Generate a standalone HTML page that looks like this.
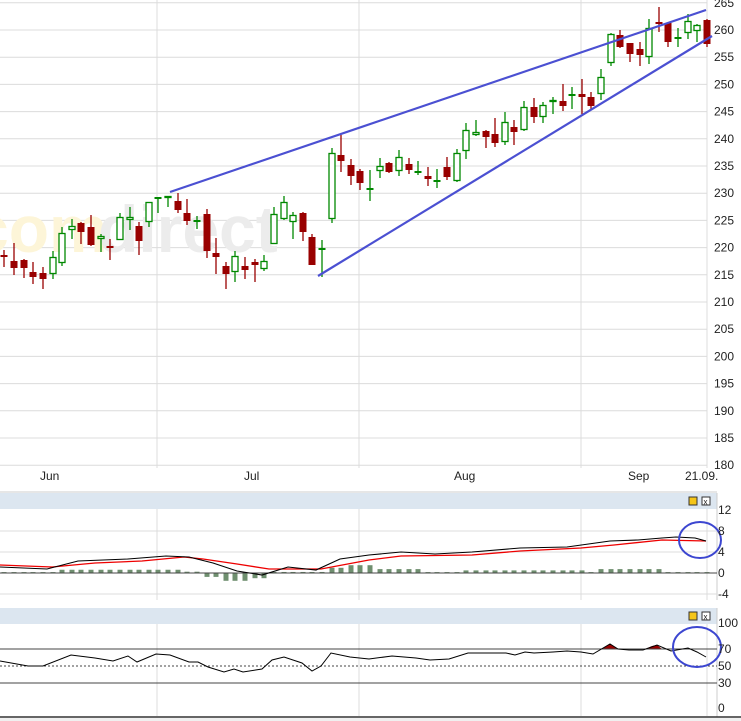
<!DOCTYPE html>
<html><head><meta charset="utf-8"><style>
html,body{margin:0;padding:0;background:#fff;width:741px;height:721px;overflow:hidden}
svg{display:block;font-family:"Liberation Sans",sans-serif}
</style></head><body>
<svg id="s" width="741" height="721" viewBox="0 0 741 721" xmlns="http://www.w3.org/2000/svg">
<rect width="741" height="721" fill="#fff"/>
<g id="grid" stroke="#dcdcdc" stroke-width="1"></g>
<text x="-28" y="252" font-size="66" font-weight="bold" fill="#fdf5d8" font-family="Liberation Sans,sans-serif">com</text>
<text x="98" y="252" font-size="66" font-weight="bold" fill="#ececec" font-family="Liberation Sans,sans-serif">direct</text>
<g id="candles"></g>
<line x1="170" y1="192" x2="706" y2="10" stroke="#4b50d2" stroke-width="2.2"/>
<line x1="318" y1="276" x2="712" y2="36" stroke="#4b50d2" stroke-width="2.2"/>
<g id="labels" font-size="12" fill="#222"></g>
<g font-size="12" fill="#222">
<text x="40" y="480">Jun</text><text x="244" y="480">Jul</text><text x="454" y="480">Aug</text><text x="628" y="480">Sep</text><text x="685" y="480">21.09.</text>
</g>
<line x1="0" y1="492" x2="717" y2="492" stroke="#ccc"/>
<!-- MACD panel -->
<rect x="0" y="493" width="717" height="16" fill="#dce6f0"/>
<line x1="717" y1="493" x2="717" y2="600" stroke="#ccc"/>
<rect x="689" y="497" width="8" height="8" fill="#f5c518" stroke="#333" stroke-width="1"/>
<rect x="702" y="497" width="8" height="8" fill="#fff" stroke="#333" stroke-width="1"/>
<text x="703.5" y="504.5" font-size="8" fill="#222">x</text>
<g stroke="#dcdcdc"><line x1="0" y1="531" x2="717" y2="531"/><line x1="0" y1="552" x2="717" y2="552"/><line x1="0" y1="594" x2="717" y2="594"/>
<line x1="157" y1="509" x2="157" y2="600"/><line x1="359" y1="509" x2="359" y2="600"/><line x1="581" y1="509" x2="581" y2="600"/><line x1="707" y1="509" x2="707" y2="600"/></g>
<g id="hist" fill="#6f8f6f"></g>
<line x1="0" y1="573" x2="717" y2="573" stroke="#444"/>
<polyline fill="none" stroke="#e00" stroke-width="1.3" points="0,565 52,567 95,563 142,561 184,557 203,559 237,564 269,569 321,569 369,560 401,556 472,555 520,551 581,548 614,545 662,540 706,541"/>
<polyline fill="none" stroke="#000" stroke-width="1.1" points="0,567 47,569 78,561 128,559 166,556 189,557 213,563 237,571 262,575 288,567 316,570 340,559 369,555 401,552 435,554 472,552 520,548 567,547 610,541 638,540 662,538 676,537 695,538 706,541"/>
<ellipse cx="700" cy="540" rx="21" ry="18" fill="none" stroke="#3c46d0" stroke-width="2"/>
<g font-size="12" fill="#222"><text x="718" y="514">12</text><text x="718" y="535">8</text><text x="718" y="556">4</text><text x="718" y="577">0</text><text x="718" y="598">-4</text></g>
<!-- RSI panel -->
<rect x="0" y="608" width="717" height="16" fill="#dce6f0"/>
<line x1="717" y1="608" x2="717" y2="717" stroke="#ccc"/>
<rect x="689" y="612" width="8" height="8" fill="#f5c518" stroke="#333" stroke-width="1"/>
<rect x="702" y="612" width="8" height="8" fill="#fff" stroke="#333" stroke-width="1"/>
<text x="703.5" y="619.5" font-size="8" fill="#222">x</text>
<g stroke="#dcdcdc"><line x1="157" y1="624" x2="157" y2="716"/><line x1="359" y1="624" x2="359" y2="716"/><line x1="581" y1="624" x2="581" y2="716"/><line x1="707" y1="624" x2="707" y2="716"/></g>
<path d="M602,649 L610,644 L618,649 Z M645,649 L652,646 L657,645 L662,649 Z" fill="#990000"/>
<line x1="0" y1="649" x2="717" y2="649" stroke="#444"/>
<line x1="0" y1="666" x2="717" y2="666" stroke="#444" stroke-dasharray="2,2"/>
<line x1="0" y1="683" x2="717" y2="683" stroke="#444"/>
<polyline fill="none" stroke="#000" stroke-width="1" points="0,661 28,666 43,666 71,655 95,658 113,661 128,656 137,662 156,654 170,655 189,662 198,662 208,667 224,672 234,669 243,672 262,669 272,660 284,657 302,663 312,671 321,666 331,653 350,657 369,659 392,656 416,658 430,660 449,659 468,653 491,653 506,653 515,655 525,652 534,653 553,652 567,651 581,652 593,654 610,644 618,649 629,650 643,650 657,645 671,651 688,648 697,652 706,657"/>
<ellipse cx="697" cy="647" rx="24" ry="20" fill="none" stroke="#3c46d0" stroke-width="2"/>
<g font-size="12" fill="#222"><text x="718" y="627">100</text><text x="718" y="653">70</text><text x="718" y="670">50</text><text x="718" y="687">30</text><text x="718" y="712">0</text></g>
<line x1="0" y1="717" x2="741" y2="717" stroke="#333" stroke-width="1.5"/>
<rect x="0" y="718" width="741" height="3" fill="#f0f0f0"/>
</svg>
<script>
var NS="http://www.w3.org/2000/svg";
function el(p,t,a){var e=document.createElementNS(NS,t);for(var k in a)e.setAttribute(k,a[k]);p.appendChild(e);return e;}
var g=document.getElementById("grid"),L=document.getElementById("labels");
for(var p=265;p>=180;p-=5){var y=30+(260-p)*5.44;el(g,"line",{x1:0,y1:y,x2:707,y2:y});var t=el(L,"text",{x:714,y:y+4});t.textContent=p;}
[157,359,581,707].forEach(function(x){el(g,"line",{x1:x,y1:0,x2:x,y2:468});});
// x, type(r/g), bodyTop, bodyBot, wickTop, wickBot
var c=[[4,'r',256,256,250,267],[14,'r',261,268,243,275],[24,'r',260,268,259,278],[33,'r',272,277,262,284],[43,'r',273,279,267,289],[53,'g',257,274,251,279],[62,'g',233,263,227,266],[72,'g',226,230,219,239],[81,'r',223,232,222,244],[91,'r',227,245,215,246],[101,'g',236,239,234,252],[110,'r',247,247,239,260],[120,'g',217,240,213,240],[130,'g',217,220,207,230],[139,'r',226,241,222,255],[149,'g',202,222,202,227],[158,'g',198,198,197,213],[168,'g',196,198,196,207],[178,'r',201,210,193,213],[187,'r',213,221,199,225],[197,'g',221,221,216,229],[207,'r',214,251,209,258],[216,'r',253,257,238,274],[226,'r',266,274,262,289],[235,'g',256,272,251,282],[245,'r',266,270,257,279],[255,'r',262,265,259,282],[264,'g',261,269,255,271],[274,'g',214,244,207,244],[284,'g',202,219,196,220],[293,'g',215,222,212,239],[303,'r',213,232,212,241],[312,'r',237,265,234,265],[322,'g',249,249,240,277],[332,'g',153,219,148,223],[341,'r',155,161,135,172],[351,'r',165,176,159,185],[360,'r',171,183,169,190],[370,'g',189,189,170,201],[380,'g',166,171,158,178],[389,'r',163,172,162,173],[399,'g',157,171,150,176],[409,'r',164,170,158,174],[418,'g',172,172,161,175],[428,'r',176,179,167,186],[437,'g',181,181,169,188],[447,'r',167,177,157,180],[457,'g',153,181,149,182],[466,'g',130,151,123,159],[476,'g',132,135,120,136],[486,'r',131,137,130,148],[495,'r',134,143,118,147],[505,'g',122,142,112,145],[514,'r',127,132,120,145],[524,'g',107,130,101,131],[534,'r',107,117,98,123],[543,'g',105,117,102,123],[553,'g',100,102,97,114],[563,'r',101,106,84,111],[572,'g',95,95,87,109],[582,'r',94,97,79,114],[591,'r',97,106,92,110],[601,'g',77,94,69,100],[611,'g',34,63,33,66],[620,'r',35,47,30,48],[630,'r',43,54,43,62],[640,'r',49,55,42,66],[649,'g',28,57,19,64],[659,'r',22,24,7,32],[668,'r',23,42,23,47],[678,'g',38,38,28,47],[688,'g',21,33,14,39],[697,'g',25,31,24,42],[707,'r',20,44,19,47]];
var C=document.getElementById("candles");
c.forEach(function(d){var x=d[0],col=d[1]=='r'?'#990000':'#008800';
el(C,"line",{x1:x,y1:d[4],x2:x,y2:d[5],stroke:col,"stroke-width":1.3});
var h=d[3]-d[2];
if(h<2){el(C,"rect",{x:x-3.5,y:d[2]-1,width:7,height:2,fill:col});}
else if(d[1]=='r'){el(C,"rect",{x:x-3.5,y:d[2],width:7,height:h,fill:col});}
else{el(C,"rect",{x:x-3,y:d[2]+0.5,width:6,height:h-1,fill:"#fff",stroke:col,"stroke-width":1.3});}
});
// histogram
var H=document.getElementById("hist");
var hv={};
for(var i=0;i<c.length;i++){var x=c[i][0],v=0.7;
if(x>60&&x<185)v=2.5;if(x>=200&&x<=270)v=-(x<225?3:(x<255?6:4));if(x>325&&x<425)v=(x<345?4:(x<380?6:3));if(x>460&&x<590)v=2;if(x>600&&x<665)v=3;if(x>=185&&x<200)v=1;if(x>270&&x<325)v=0.8;
var hgt=Math.abs(v)*1.3;
if(v>0)el(H,"rect",{x:x-2.5,y:573-hgt,width:5,height:hgt});else el(H,"rect",{x:x-2.5,y:573,width:5,height:hgt});}
</script>
</body></html>
